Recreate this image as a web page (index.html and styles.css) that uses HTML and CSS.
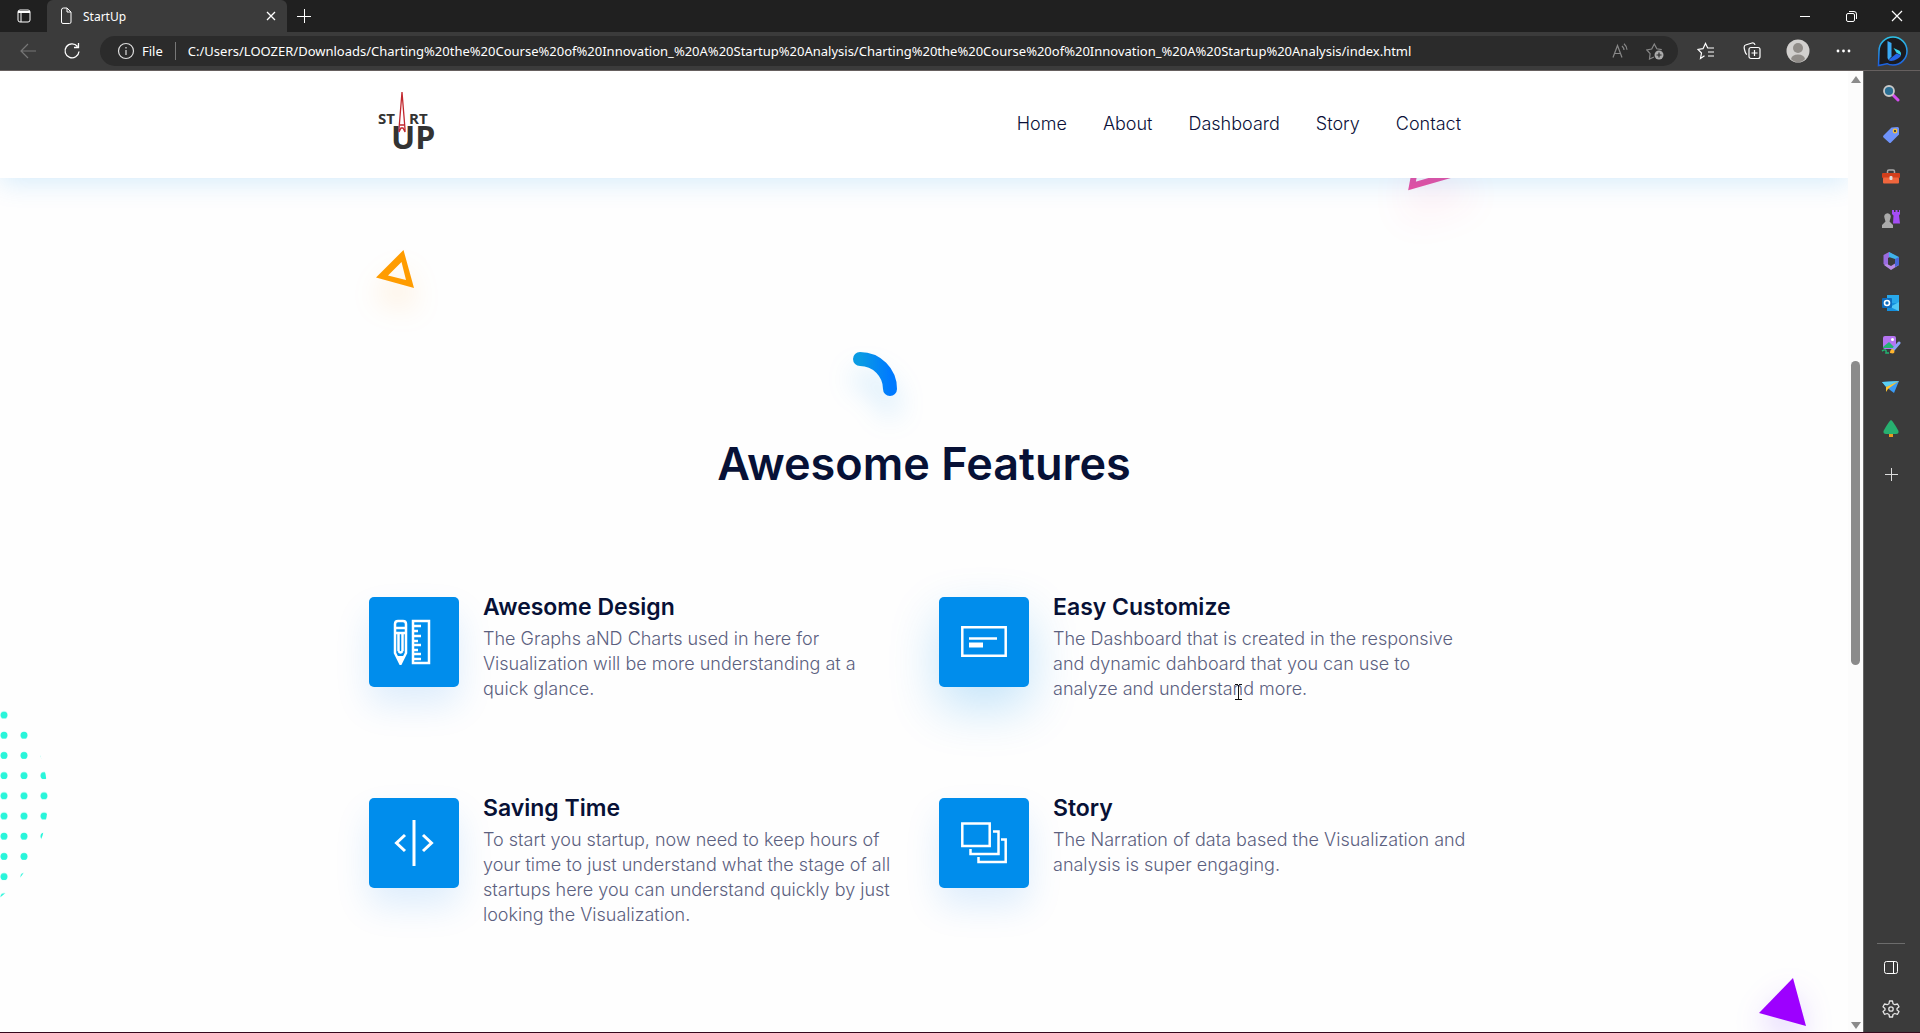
FILE: index.html
```html
<!DOCTYPE html>
<html lang="en">
<head>
<meta charset="utf-8">
<title>StartUp</title>
<link rel="stylesheet" href="styles.css">
</head>
<body>
<div class="browser">
  <div class="tabstrip">
    <button class="icon-btn workspaces" aria-label="Tab actions"><svg width="16" height="16" fill="none" stroke="#fff"><rect x="2" y="2" width="12" height="12" rx="2"/><path d="M2 3.500h12M2 4.500h12M5 5v9"/></svg></button>
    <div class="tab">
      <svg width="12" height="18" fill="none" stroke="#fff"><path d="M1.500 3a2 2 0 0 1 2-2H7l4 4v10a1.500 1.500 0 0 1-1.500 1.500h-6.500A1.500 1.500 0 0 1 1.500 15zM7 1v4h4"/></svg>
      <span class="tab-title">StartUp</span>
      <button class="icon-btn" aria-label="Close tab"><svg width="10" height="10" stroke="#fff" stroke-width="1.300"><path d="M1 1l8 8M9 1l-8 8"/></svg></button>
    </div>
    <button class="icon-btn newtab" aria-label="New tab"><svg width="14" height="14" stroke="#fff"><path d="M7.500 0v14M0 7.500h14"/></svg></button>
    <div class="window-buttons">
      <button class="icon-btn" aria-label="Minimize"><svg width="10" height="10" stroke="#fff"><path d="M0 5.500h10"/></svg></button>
      <button class="icon-btn" aria-label="Restore"><svg width="11" height="11" fill="none" stroke="#fff"><rect x=".5" y="2.500" width="8" height="8" rx="1.500"/><path d="M3 .5h5a2.500 2.500 0 0 1 2.500 2.500v5"/></svg></button>
      <button class="icon-btn" aria-label="Close"><svg width="12" height="12" stroke="#fff" stroke-width="1.200"><path d="M1 1l10 10M11 1L1 11"/></svg></button>
    </div>
  </div>

  <div class="toolbar">
    <button class="icon-btn back" aria-label="Back"><svg width="18" height="16" fill="none" stroke="#777"  stroke-width="1.200"><path d="M17 8H2M9 1L2 8l7 7"/></svg></button>
    <button class="icon-btn reload" aria-label="Refresh"><svg width="18" height="18" fill="none" stroke="#fff" stroke-width="1.300"><path d="M16 9.500A7 7 0 1 1 14.500 4.500M15.500 1v4.500H11"/></svg></button>
    <div class="address">
      <button class="site-info"><svg width="18" height="18" fill="none" stroke="#ddd" stroke-width="1.200"><circle cx="9" cy="9" r="7.500"/><path d="M9 8v5M9 5v1.500"/></svg>File</button>
      <input class="url" aria-label="Address" value="C:/Users/LOOZER/Downloads/Charting%20the%20Course%20of%20Innovation_%20A%20Startup%20Analysis/Charting%20the%20Course%20of%20Innovation_%20A%20Startup%20Analysis/index.html">
      <button class="icon-btn" aria-label="Read aloud"><svg width="16" height="16" fill="none" stroke="#888" stroke-width="1.200"><path d="M1 14.500L5.500 2.500 10 14.500M2.500 10.500h6M10 3q2 2 2 4M12 .8q3 2.700 3 6"/></svg></button>
      <button class="icon-btn" aria-label="Add to favorites"><svg width="18" height="18" fill="none" stroke="#888" stroke-width="1.200"><path d="M8 15l-4.500 2 .6-5.300L.8 8l4.900-1L8.300 2l2.500 4.800 5 .8"/><circle cx="13" cy="13" r="4.500" fill="#aaa" stroke="none"/><path d="M10.500 13h5M13 10.500v5" stroke="#2b2b2b"/></svg></button>
    </div>
    <div class="actions">
      <button class="icon-btn" aria-label="Favorites"><svg width="18" height="18" fill="none" stroke="#fff" stroke-width="1.200"><path d="M7.500 13.800L3.500 16.500 4.500 11 1 7.500l5-.8L8.500 1.500 10.700 6H17M11 10h6M11 14h6"/></svg></button>
      <button class="icon-btn" aria-label="Collections"><svg width="18" height="18" fill="none" stroke="#fff" stroke-width="1.200"><path d="M4 12.500Q2.500 12 1.500 7.500 .5 3.500 2.500 3l6.500-2q2.500-.5 3 2"/><rect x="6" y="5.500" width="11" height="11" rx="2"/><path d="M11.500 8v6M8.500 11h6"/></svg></button>
      <button class="icon-btn" aria-label="Profile"><svg width="24" height="24"><circle cx="12" cy="12" r="11.500" fill="#d2d0ce"/><circle cx="12" cy="9" r="5" fill="#918d89"/><path d="M5 20q1-4.500 7-4.500t7 4.500q-3 3.300-7 3.300T5 20z" fill="#918d89"/></svg></button>
      <button class="icon-btn more" aria-label="Settings and more"><svg width="16" height="4" fill="#fff"><circle cx="3" cy="2" r="1.400"/><circle cx="8.500" cy="2" r="1.400"/><circle cx="14" cy="2" r="1.400"/></svg></button>
      <button class="icon-btn discover" aria-label="Discover"><svg width="32" height="32" fill="none"><defs><linearGradient id="ring" x1="0" y1="0" x2="0" y2="1"><stop stop-color="#2dc3e8"/><stop offset="1" stop-color="#1c5fe0"/></linearGradient></defs><path d="M1.500 30.500L2 16A14 14 0 1 1 16 30q-4 0-6-1.300z" fill="#1b1b1f" stroke="url(#ring)" stroke-width="1.500"/><path d="M10.500 6l4 2v13.500l-3 3.500-1-2z" fill="#3aa9f5"/><path d="M16.500 13l6 2.800q2 1.500 1.500 4.500l-4.500-2.600z" fill="#36d2e8"/><path d="M11.500 25l8-6.500 4.500 1.800q-1 3-7 5.200-4 1-5.500-.5z" fill="#2565e8"/></svg></button>
    </div>
  </div>

  <div class="workspace">
    <div class="page">
      <header class="site-header">
        <div class="container header-row">
          <a href="#" class="logo" aria-label="Start up"><svg width="58" height="60"><g class="logo-text"><text x="0" y="33" class="logo-small">ST</text><text x="31" y="33" class="logo-small">RT</text><text x="13" y="58" class="logo-big">UP</text></g><path d="M24 1l-3 37v3l2-4h2l2 4v-3zM22 34h4" fill="#fff" stroke="#c1272d" stroke-width="1.300"/></svg></a>
          <nav class="nav">
            <a href="#">Home</a><a href="#">About</a><a href="#">Dashboard</a><a href="#">Story</a><a href="#">Contact</a>
          </nav>
        </div>
      </header>

      <section class="features">
        <svg class="shape shape-pink" width="120" height="120"><polygon points="46,63 56,10 98,48" fill="none" stroke="#ec4ea0" stroke-width="6"/></svg>
        <svg class="shape shape-orange" width="50" height="50"><path fill-rule="evenodd" fill="#ff9c00" d="M1 28.500L28.500 1 39 39zM13 26.500L31 31 26.500 13z"/></svg>
        <svg class="shape shape-arc" width="60" height="60"><defs><linearGradient id="arc"><stop stop-color="#0a9be3"/><stop offset="1" stop-color="#007aff"/></linearGradient></defs><path d="M8 9a30 30 0 0 1 30 30" fill="none" stroke="url(#arc)" stroke-width="14" stroke-linecap="round"/></svg>
        <svg class="shape shape-dots" width="50" height="200"><defs><pattern id="dots" width="20" height="20.200" patternUnits="userSpaceOnUse" y="-5"><circle cx="4" cy="10" r="3.500" fill="#28f5da"/></pattern></defs><circle cx="-77" cy="89" r="125" fill="url(#dots)"/></svg>
        <svg class="shape shape-purple" width="50" height="50"><polygon points="35,1 1,36 48,49" fill="#9d00ff"/></svg>

        <div class="container">
          <h2>Awesome Features</h2>
          <div class="grid">
            <article class="feature">
              <div class="tile"><svg width="46" height="46" fill="none" stroke="#fff" stroke-width="2.500"><path d="M4 34V5q0-3 3-3h5q3 0 3 3v29L9.500 45zM4 9h11M4 14h11M7.500 15v17M11.500 15v17M7.500 32q2 3 4 0"/><path d="M5 37h9l-4.500 9z" fill="#fff" stroke="none"/><path d="M22 2h16v42H22zM23 7h7M23 12h4M23 17h7M23 22h4M23 26h7M23 31h4M23 35h7M23 40h7"/></svg></div>
              <div><h3>Awesome Design</h3><p>The Graphs aND Charts used in here for<br>Visualization will be more understanding at a<br>quick glance.</p></div>
            </article>
            <article class="feature">
              <div class="tile tile-glow"><svg width="46" height="46" fill="none" stroke="#fff" stroke-width="2.500"><path d="M1.300 8.200h43.400v28.600H1.300z"/><path d="M8 19.500h28"/><path d="M8 26h14" stroke-width="5"/></svg></div>
              <div><h3>Easy Customize</h3><p>The Dashboard that is created in the responsive<br>and dynamic dahboard that you can use to<br>analyze and understand more.</p></div>
            </article>
            <article class="feature">
              <div class="tile"><svg width="46" height="46" fill="none" stroke="#fff" stroke-width="3"><path d="M23 0v46M14 15L5.500 23 14 31M32 15l8.500 8L32 31"/></svg></div>
              <div><h3>Saving Time</h3><p>To start you startup, now need to keep hours of<br>your time to just understand what the stage of all<br>startups here you can understand quickly by just<br>looking the Visualization.</p></div>
            </article>
            <article class="feature">
              <div class="tile"><svg width="46" height="46" fill="none" stroke="#fff" stroke-width="2.500"><path d="M1.300 3.500h27.400V26H1.300zM32 11.500h5.500v22.500H9.500v-5M40 19.500h4.700V42H17.500v-5"/></svg></div>
              <div><h3>Story</h3><p>The Narration of data based the Visualization and<br>analysis is super engaging.</p></div>
            </article>
          </div>
        </div>
        <svg class="shape cursor" width="9" height="17" stroke="#111"><path d="M1 .5h3M5 .5h3M4.500 1v15M1 15.500h3M5 15.500h3" fill="none"/></svg>
      </section>
    </div>

    <div class="scrollbar">
      <svg width="10" height="8" fill="#8b8b8b"><path d="M5 0l5 7H0z"/></svg>
      <div class="track"><div class="thumb"></div></div>
      <svg width="10" height="8" fill="#8b8b8b"><path d="M5 8l5-7H0z"/></svg>
    </div>

    <aside class="sidebar">
      <button class="icon-btn" aria-label="Search"><svg width="18" height="18"><path d="M11 11l5 5" stroke="#d44df0" stroke-width="3" stroke-linecap="round"/><circle cx="7" cy="7" r="5" fill="#2a6f94" stroke="#c9c9c9" stroke-width="1.800"/></svg></button>
      <button class="icon-btn" aria-label="Shopping"><svg width="18" height="18"><path d="M9.500 1.500l6-.5q1.500 0 1.500 1.500v6l-8 8q-1 1-2 0L1.500 11.500q-1-1 0-2z" fill="#6f93fa"/><circle cx="13" cy="5" r="1.800" fill="#444" stroke="#ffc530" stroke-width="1.200"/></svg></button>
      <button class="icon-btn" aria-label="Tools"><svg width="18" height="18"><path d="M5.500 5V3.500q0-1.500 1.500-1.500h4q1.500 0 1.500 1.500V5" fill="none" stroke="#aaa" stroke-width="1.500"/><rect x="0" y="5" width="18" height="5" rx="1" fill="#d13f1c"/><rect x="1" y="9.500" width="16" height="6" rx="1" fill="#f0663d"/><rect x="7.500" y="8" width="3" height="4" rx="1" fill="#ddd"/></svg></button>
      <button class="icon-btn" aria-label="Games"><svg width="18" height="18"><path d="M10 0h2v2h1.500V0h2v2H17V0h1v4l-1 1.500 1 8h-7l.5-8L10 4z" fill="#a54df5"/><path d="M2.500 8a3.300 3.300 0 1 1 6 0l-1 3.500 3.500 3.500v3H0v-3l3.500-3.500z" fill="#aaa"/></svg></button>
      <button class="icon-btn" aria-label="Microsoft 365"><svg width="18" height="18"><path d="M7 0L1.500 3v9L6 15V6l6-3z" fill="#9a6be0"/><path d="M7 0l10 5v8l-4-2V7L7 5z" fill="#3fb3ea"/><path d="M2 13l7 5 8-5V9l-8 5-4-2z" fill="#b88be8"/><path d="M17 5v8l-4 2V7z" fill="#4866d9"/></svg></button>
      <button class="icon-btn" aria-label="Outlook"><svg width="18" height="18"><rect x="5" y="1" width="12" height="10" fill="#28a8ea"/><path d="M5 9h12v8H5z" fill="#1490df"/><path d="M17 8v9L8 13z" fill="#50c8f5"/><rect x="0" y="4" width="10" height="10" rx="1" fill="#0f6cbd"/><circle cx="5" cy="9" r="2.500" fill="none" stroke="#fff" stroke-width="1.600"/></svg></button>
      <button class="icon-btn" aria-label="Image creator"><svg width="20" height="20"><rect x="2" y="1" width="13" height="13" rx="2" fill="#b574f2"/><path d="M2 12l6-5 6 6H2z" fill="#22b573"/><circle cx="11.500" cy="4.500" r="1.500" fill="#fff"/><path d="M12 15l6-7" stroke="#8aa2f5" stroke-width="3" stroke-linecap="round"/><path d="M9 18q0-4 3-4 3 3 0 4.500z" fill="#ffb52e"/><path d="M1 16q5-3 4 2h3" fill="none" stroke="#22b573" stroke-width="1.500"/></svg></button>
      <button class="icon-btn" aria-label="Drop"><svg width="18" height="18"><path d="M0 4l17-1-5 12-4-3z" fill="#3b9bf5"/><path d="M0 4l17-1L4 9z" fill="#5ad0f5"/><path d="M17 3L4 9v5l2-3z" fill="#ffc42e"/></svg></button>
      <button class="icon-btn" aria-label="Tree"><svg width="18" height="18"><rect x="7" y="13" width="4" height="4" fill="#e99a20"/><path d="M9 0q2 1 7.500 11 .5 3-2.500 3H4q-3 0-2.500-3Q7 1 9 0z" fill="#27b070"/></svg></button>
      <button class="icon-btn" aria-label="Customize"><svg width="13" height="13" stroke="#ddd"><path d="M6.500 0v13M0 6.500h13"/></svg></button>
      <div class="sidebar-end">
        <button class="icon-btn" aria-label="Hide sidebar"><svg width="14" height="13" fill="none" stroke="#fff"><rect x=".5" y=".5" width="13" height="12" rx="2"/><path d="M9.500 1v11"/></svg></button>
        <button class="icon-btn" aria-label="Sidebar settings"><svg width="18" height="18" fill="none" stroke="#e5e5e5" stroke-width="1.300"><path d="M7.500 1h3l.5 2.700 1.800 1L15.500 4l1.500 2.700L15 8.500v1.500l2 1.500-1.500 2.800-2.700-.8-1.800 1-.5 2.500h-3L7 14.500l-1.800-1-2.700.8L1 11.500 3 10V8.500L1 6.700 2.500 4l2.700.7L7 3.700z" stroke-linejoin="round"/><circle cx="9" cy="9" r="2.200"/></svg></button>
      </div>
    </aside>
  </div>
</div>
</body>
</html>
```

FILE: styles.css
```css
* { box-sizing: border-box; }

body { margin: 0; font-family: "Inter", "Liberation Sans", sans-serif; }

h2, h3, p { margin: 0; }

svg { display: block; flex: none; }

.browser {
  display: flex;
  flex-direction: column;
  min-height: 100vh;
  background: #3b3b3b;
  border-bottom: 1px solid #35091d;
}

.icon-btn {
  display: flex;
  align-items: center;
  justify-content: center;
  padding: 0;
  border: 0;
  background: none;
}

/* Tab strip */
.tabstrip { display: flex; align-items: center; height: 32px; background: #202020; }
.workspaces { width: 47px; }
.tab {
  display: flex;
  align-items: center;
  gap: 11px;
  width: 240px;
  height: 32px;
  padding: 0 11px 0 13px;
  border-radius: 6px 6px 0 0;
  background: #3b3b3b;
}
.tab-title { flex: 1; color: #fff; font: 12px "Noto Sans", sans-serif; }
.newtab { width: 34px; }
.window-buttons { display: flex; margin-left: auto; }
.window-buttons .icon-btn { width: 46px; height: 32px; }

/* Toolbar */
.toolbar { display: flex; align-items: center; height: 39px; border-bottom: 1px solid #66605f; }
.back { width: 56px; }
.reload { width: 32px; }
.address {
  display: flex;
  flex: 1;
  align-items: center;
  gap: 18px;
  height: 30px;
  margin-left: 12px;
  padding: 0 14px 0 17px;
  border-radius: 15px;
  background: #2b2b2b;
}
.site-info {
  display: flex;
  align-items: center;
  gap: 7px;
  padding: 0 12px 0 0;
  border: 0;
  border-right: 1px solid #777;
  background: none;
  color: #fff;
  font: 13px "Noto Sans", sans-serif;
}
.url {
  flex: 1;
  min-width: 0;
  margin-left: -6px;
  padding: 0;
  border: 0;
  background: none;
  color: #fff;
  font: 13px "Noto Sans", sans-serif;
}
.actions { display: flex; align-items: center; padding-left: 5px; }
.actions .icon-btn { width: 46px; }
.actions .more { width: 44px; }
.actions .discover { width: 55px; }

/* Web page */
.workspace { display: flex; flex: 1; }
.page { position: relative; flex: 1; overflow: hidden; background: #fefefe; }
.container { max-width: 1140px; margin: 0 auto; padding: 0 15px; }
.site-header { position: relative; z-index: 2; background: #fff; box-shadow: 0 5px 25px rgba(0, 141, 236, .16); }
.header-row { display: flex; align-items: center; justify-content: space-between; height: 107px; }
.logo { padding: 0 0 7px 9px; }
.logo svg { overflow: visible; }
.logo-text { fill: #333; font-family: "Open Sans", sans-serif; font-weight: 700; }
.logo-small { font-size: 15px; }
.logo-big { font-size: 32px; }
.nav { display: flex; padding-bottom: 2px; }
.nav a { padding: 0 18px; color: #0a1039; font-size: 18px; font-weight: 300; line-height: 24px; text-decoration: none; }

.features { padding: 260px 0 100px; }
.features h2 { color: #071136; font-size: 45px; font-weight: 600; line-height: 52px; text-align: center; }
.grid { display: grid; grid-template-columns: 1fr 1fr; gap: 86px 30px; padding-top: 107px; }
.feature { display: flex; gap: 24px; min-height: 115px; white-space: nowrap; }
.feature h3 { color: #071136; font-size: 23px; font-weight: 600; line-height: 26px; padding-bottom: 6px; margin-top: -3px; }
.feature p { color: #5b607f; font-size: 18px; font-weight: 300; line-height: 25px; }
.tile {
  display: flex;
  flex: none;
  align-items: center;
  justify-content: center;
  width: 90px;
  height: 90px;
  border-radius: 5px;
  background: #008dec;
  box-shadow: 0 18px 35px rgba(0, 125, 236, .13);
}
.tile-glow { box-shadow: 0 20px 50px rgba(0, 141, 236, .24); }

/* Decorations floating over the page */
.shape { position: absolute; overflow: visible; }
.shape-pink { top: 52px; left: calc(50% + 442px); filter: drop-shadow(0 25px 18px rgba(255, 30, 120, .16)); }
.shape-orange { top: 178px; left: calc(50% - 549px); filter: drop-shadow(0 20px 14px rgba(255, 140, 0, .2)); }
.shape-arc { top: 279px; left: calc(50% - 72px); filter: drop-shadow(0 20px 14px rgba(0, 141, 236, .2)); }
.shape-dots { top: 639px; left: 0; overflow: hidden; }
.shape-purple { top: 906px; right: 40px; filter: drop-shadow(0 12px 15px rgba(110, 30, 255, .2)); }
.cursor { top: 613px; left: calc(50% + 310px); }

/* Scrollbar */
.scrollbar { display: flex; flex-direction: column; align-items: center; width: 15px; padding: 5px 0 3px; background: #fcfcfc; }
.track { flex: 1; padding-top: 277px; }
.thumb { width: 9px; height: 304px; border-radius: 5px; background: #8b8b8b; }

/* Sidebar */
.sidebar { display: flex; flex-direction: column; width: 57px; padding: 1px 0 2px; border-left: 1px solid #666; }
.sidebar .icon-btn { width: 54px; height: 42px; }
.sidebar > .icon-btn:nth-child(10) { margin-top: 3px; }
.sidebar-end { margin-top: auto; }
.sidebar-end::before { display: block; width: 28px; height: 1px; margin: 0 auto 2px 13px; background: #6c6c6c; content: ""; }
```
